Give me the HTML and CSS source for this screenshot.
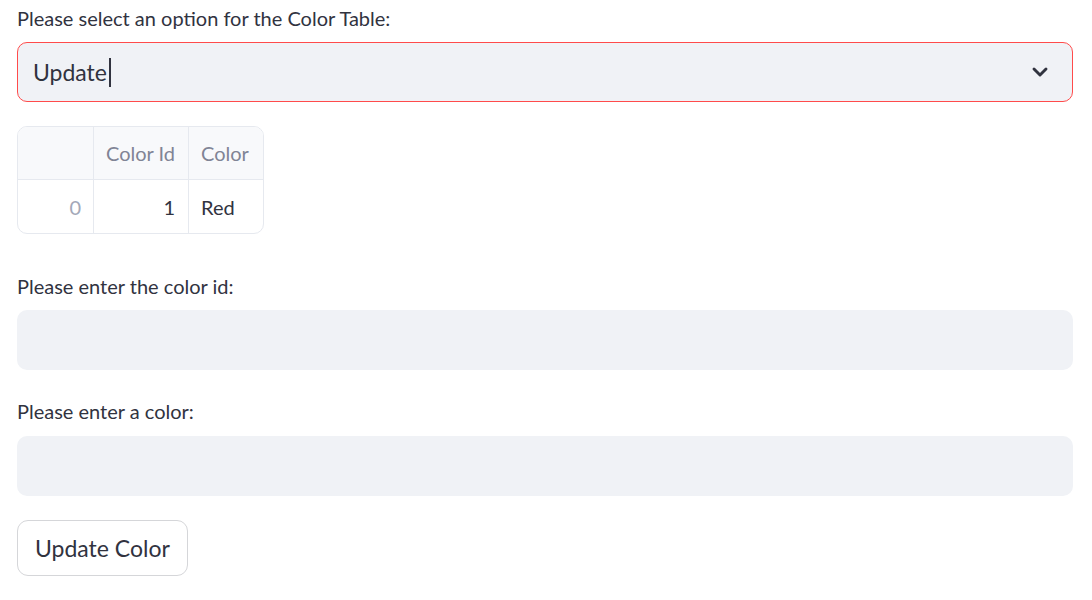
FILE: index.html
```html
<!DOCTYPE html>
<html>
<head>
<meta charset="utf-8">
<link rel="stylesheet" href="styles.css">
</head>
<body>
<main class="app">
  <label class="label label-first">Please select an option for the Color Table:</label>
  <div class="select">
    <span class="select-value">Update</span><span class="caret"></span>
    <svg class="chevron" width="20" height="20" viewBox="0 0 20 20"><path d="M4 7 L10 13 L16 7" fill="none" stroke="#31333f" stroke-width="2.9" stroke-linecap="round" stroke-linejoin="round"/></svg>
  </div>

  <table class="grid">
    <thead>
      <tr><th class="idx"></th><th class="num">Color Id</th><th class="last">Color</th></tr>
    </thead>
    <tbody>
      <tr><td class="idx">0</td><td class="num">1</td><td class="last">Red</td></tr>
    </tbody>
  </table>

  <label class="label label-2">Please enter the color id:</label>
  <div class="input"></div>

  <label class="label label-3">Please enter a color:</label>
  <div class="input"></div>

  <button class="btn">Update Color</button>
</main>
</body>
</html>
```

FILE: styles.css
```css
html, body {
  margin: 0;
  padding: 0;
  background: #ffffff;
}
body {
  font-family: "Lato", "Liberation Sans", sans-serif;
  color: #31333f;
}
.app {
  display: flex;
  flex-direction: column;
  align-items: flex-start;
  padding: 4px 19px 0 17px;
}
.label {
  font-size: 20px;
  line-height: 28px;
  height: 28px;
}
.label-first { margin-bottom: 10px; }
.select {
  box-sizing: border-box;
  width: 100%;
  height: 60px;
  border: 1px solid #ff4b4b;
  border-radius: 10px;
  background: #f0f2f6;
  display: flex;
  align-items: center;
  padding: 0 22px 0 15px;
  font-size: 23px;
}
.select-value { line-height: 28px; }
.caret {
  display: inline-block;
  width: 2px;
  height: 29px;
  background: #31333f;
  margin-left: 2px;
}
.chevron { margin-left: auto; }
.grid {
  margin-top: 24px;
  border-collapse: separate;
  border-spacing: 0;
  border: 1px solid #e6e9ef;
  border-radius: 10px;
  overflow: hidden;
  font-size: 20px;
}
.grid th, .grid td {
  padding: 0 12px;
  border-left: 1px solid #e6e9ef;
  text-align: left;
  white-space: nowrap;
}
.grid th { height: 52px; }
.grid td { height: 53px; }
.grid th:first-child, .grid td:first-child { border-left: none; }
.grid th {
  background: #f8f9fb;
  color: #808495;
  font-weight: normal;
  border-bottom: 1px solid #e6e9ef;
}
.grid td { color: #31333f; }
.grid .idx {
  width: 51px;
  text-align: right;
  color: #a3a8b8;
}
.grid th.num { text-align: left; padding-right: 13px; }
.grid td.num { text-align: right; padding-right: 13px; }
.grid .last { padding-right: 14px; }
.label-2 { margin-top: 38px; margin-bottom: 10px; }
.label-3 { margin-top: 27px; margin-bottom: 11px; }
.input {
  width: 100%;
  height: 60px;
  border-radius: 10px;
  background: #f0f2f6;
}
.btn {
  margin-top: 24px;
  height: 56px;
  padding: 0 17px;
  border: 1px solid #d5d6d9;
  border-radius: 11px;
  background: #ffffff;
  color: #31333f;
  font-family: "Lato", "Liberation Sans", sans-serif;
  font-size: 23px;
}
```
